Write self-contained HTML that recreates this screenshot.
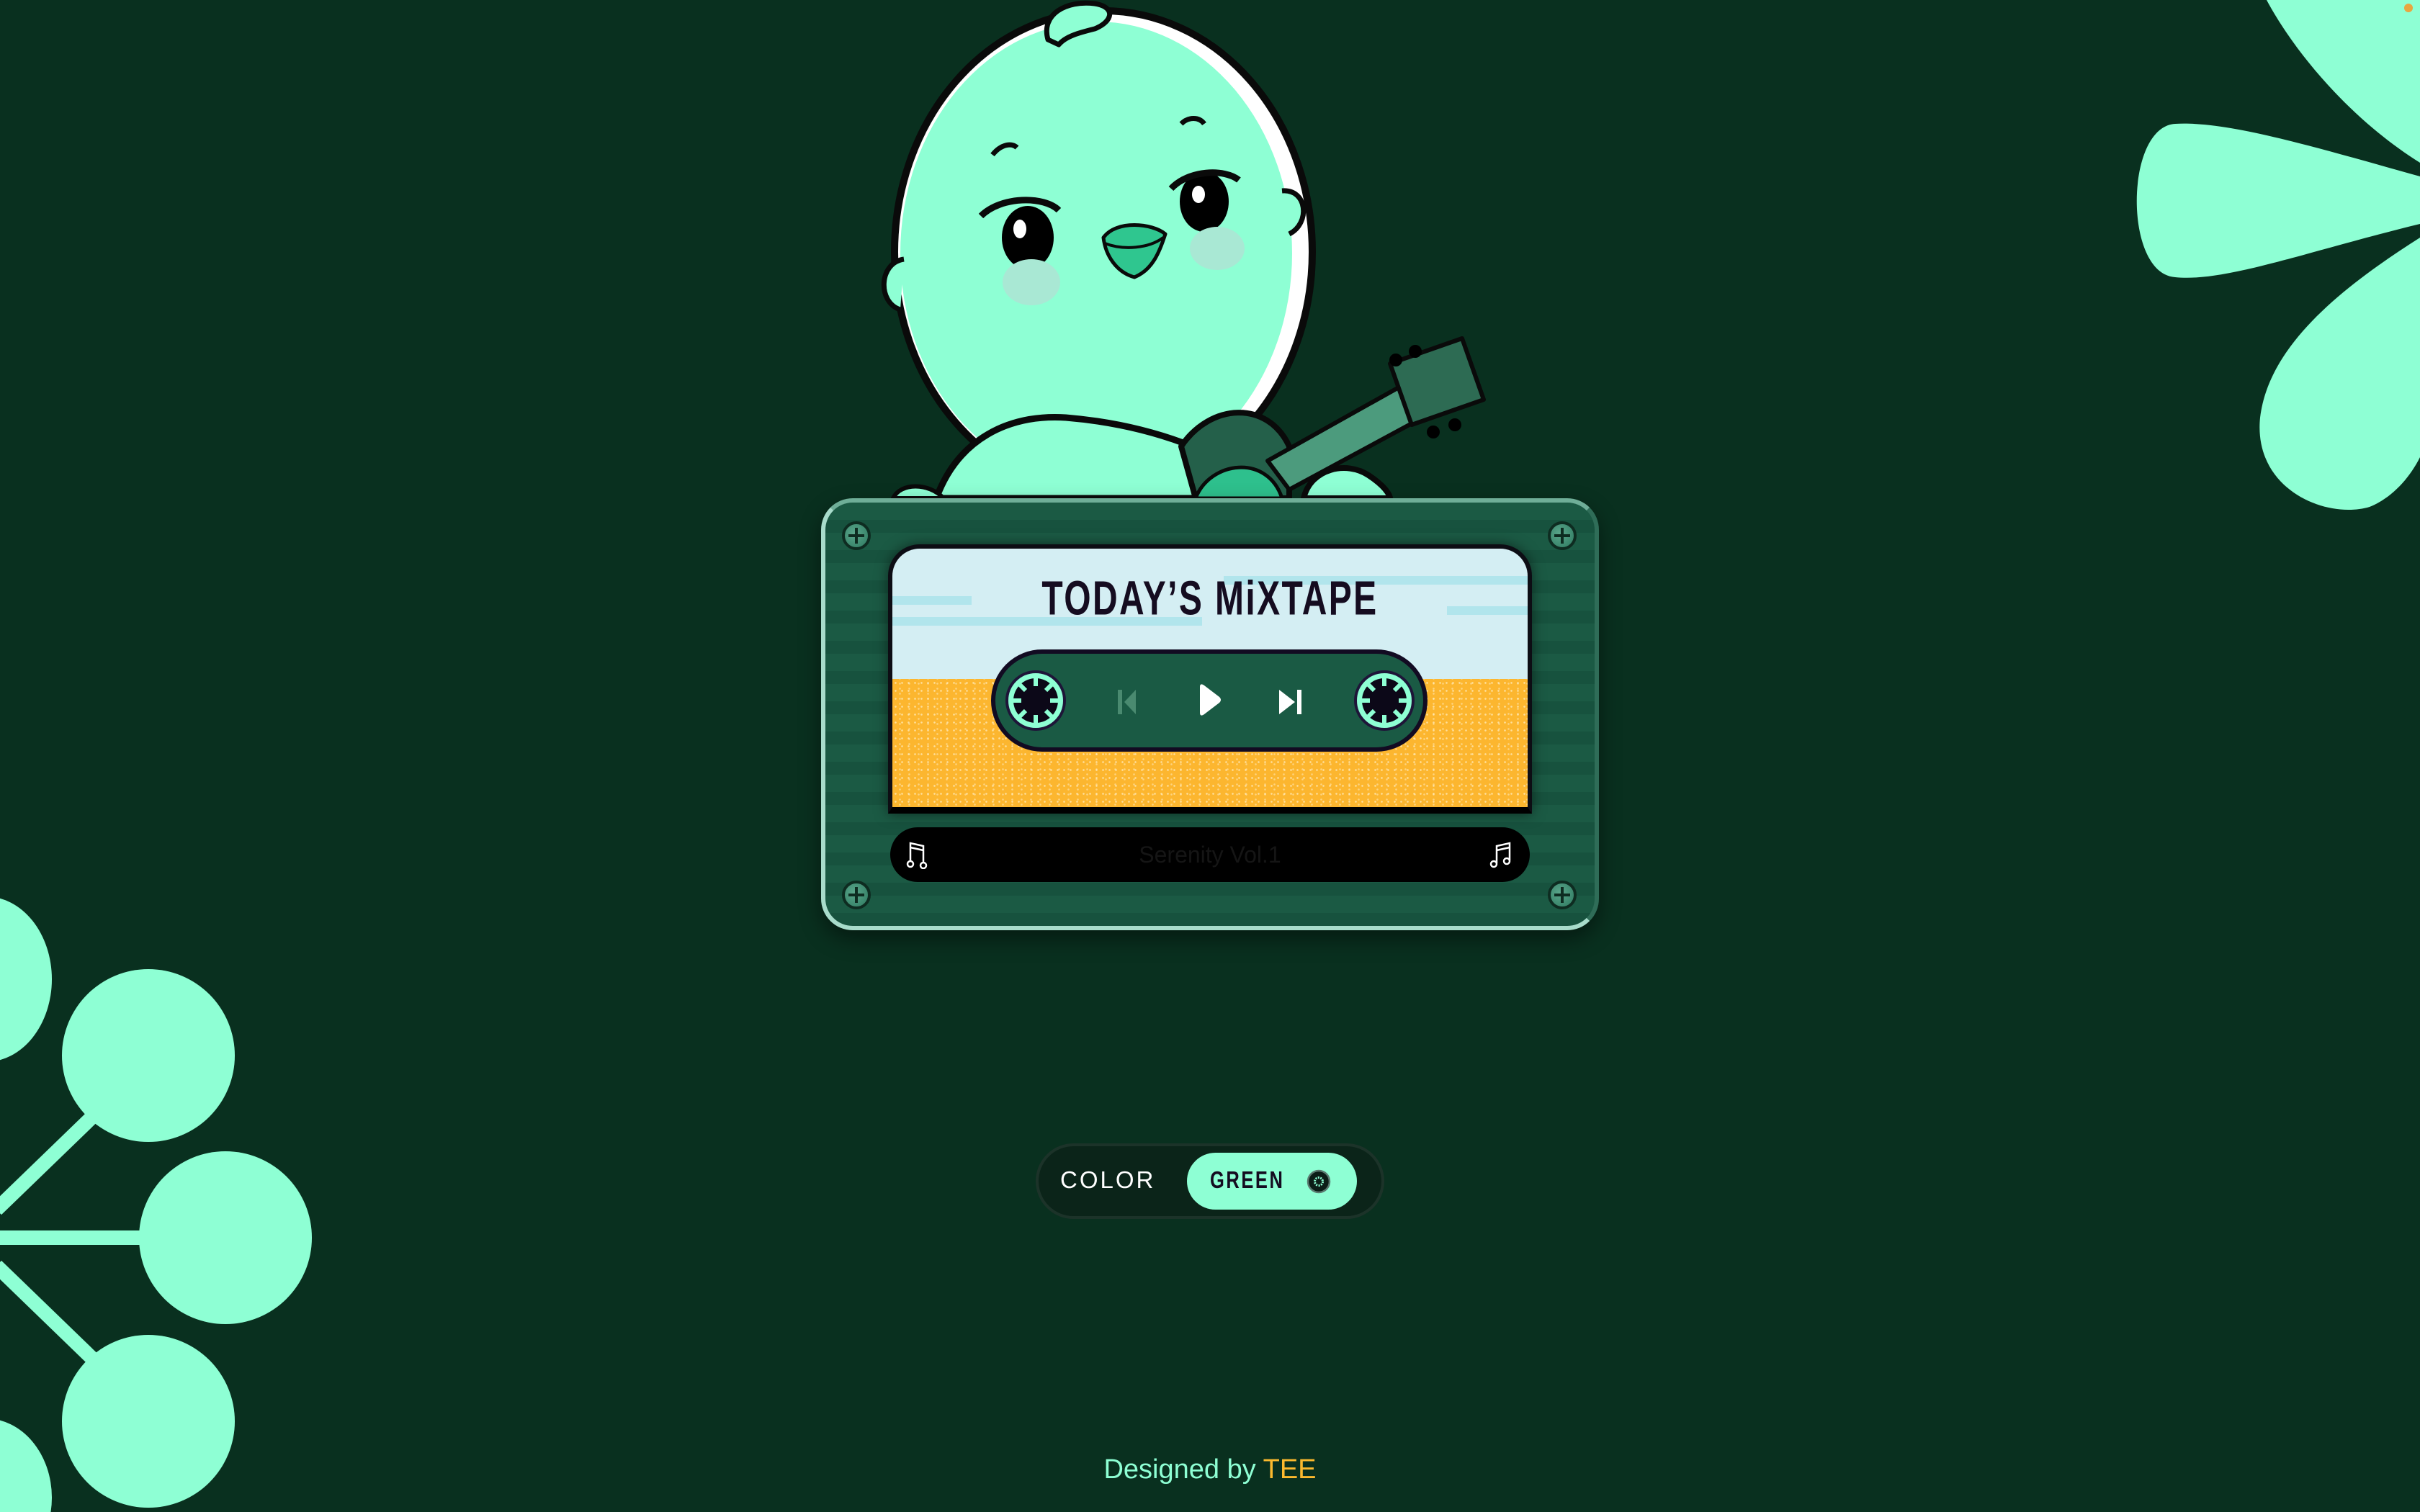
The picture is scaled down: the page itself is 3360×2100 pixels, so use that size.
<!DOCTYPE html>
<html><head><meta charset="utf-8"><style>
html,body{margin:0;padding:0;}
body{width:3360px;height:2100px;background:#09301f;position:relative;overflow:hidden;font-family:"Liberation Sans",sans-serif;}
.abs{position:absolute;}
#cas{left:1140px;top:692px;width:1080px;height:600px;box-sizing:border-box;border-radius:44px;
 border:6px solid #a8dccb;border-right-color:#2f6d58;border-top-color:#6fae98;
 background:repeating-linear-gradient(180deg,#1b5a44 0 24px,#17523e 24px 42px);
 box-shadow:0 12px 30px rgba(0,0,0,.45);}
.screw{width:40px;height:40px;border-radius:50%;background:radial-gradient(circle at 40% 40%,#5aa58a,#2d7a60);border:4px solid #0e2c21;box-sizing:border-box;}
.screw:before,.screw:after{content:"";position:absolute;background:#0e2c21;left:50%;top:50%;transform:translate(-50%,-50%);}
.screw:before{width:22px;height:4px;}.screw:after{width:4px;height:22px;}
#label{left:1233px;top:756px;width:894px;height:374px;box-sizing:border-box;border-radius:44px 44px 0 0;overflow:hidden;
 border:6px solid #0d0d14;border-bottom:9px solid #000;background:#d4eef3;box-shadow:0 0 18px rgba(0,0,0,.5);}
#yellow{left:0;top:181px;width:100%;height:200px;background:#fcb62f;
 background-image:radial-gradient(circle,rgba(255,240,200,.7) 1px,transparent 1.6px),radial-gradient(circle,rgba(255,235,190,.55) 1px,transparent 1.6px);
 background-size:9px 11px,13px 7px;background-position:0 0,4px 3px;}
.str{background:#b1e5ec;height:12px;}
#title{left:0;width:100%;top:34px;text-align:center;font-weight:bold;font-size:60px;color:#150c20;letter-spacing:3px;transform:scale(0.8,1.12);}
#ctrl{left:1376px;top:902px;width:606px;height:142px;box-sizing:border-box;border-radius:71px;background:#1a5a44;border:6px solid #120b22;}
#bar{left:1236px;top:1149px;width:888px;height:76px;border-radius:38px;background:#000;color:#151515;font-size:32px;text-align:center;line-height:76px;}
#pill{left:1438px;top:1588px;width:484px;height:105px;box-sizing:border-box;border-radius:53px;background:#0b2419;border:4px solid #1c3329;}
#green{left:1648px;top:1601px;width:236px;height:79px;border-radius:40px;background:#8effd4;}
</style></head><body>

<svg class="abs" style="left:0;top:0" width="3360" height="2100" viewBox="0 0 3360 2100">
 <g fill="#8effd4">
  <path d="M3147,0 C3190,80 3270,170 3360,226 L3360,0 Z"/>
  <path d="M3360,245 C3200,200 3090,168 3020,172 C2950,176 2948,380 3020,385 C3090,392 3200,350 3360,311 Z"/>
  <path d="M3360,330 C3250,400 3150,480 3138,580 C3128,680 3230,722 3290,704 C3320,692 3345,665 3360,635 Z"/>
  <ellipse cx="-20" cy="1360" rx="92" ry="115"/>
  <ellipse cx="206" cy="1466" rx="120" ry="120"/>
  <ellipse cx="313" cy="1719" rx="120" ry="120"/>
  <ellipse cx="206" cy="1974" rx="120" ry="120"/>
  <ellipse cx="-20" cy="2080" rx="92" ry="110"/>
 </g>
 <g stroke="#8effd4" stroke-width="20">
  <line x1="0" y1="1719" x2="210" y2="1719"/>
  <line x1="-5" y1="1680" x2="150" y2="1530"/>
  <line x1="-5" y1="1758" x2="150" y2="1908"/>
 </g>
 <circle cx="3344" cy="11" r="6" fill="#e8a640"/>

 <!-- bird -->
 <g stroke="#0a0a0a" stroke-linejoin="round">
  <ellipse cx="1532" cy="350" rx="290" ry="335" fill="#fff" stroke-width="10"/>
  <ellipse cx="1522" cy="352" rx="272" ry="322" fill="#8effd4" stroke="none"/>
  <path d="M1455,55 C1445,20 1480,0 1520,5 C1550,10 1545,30 1520,40 C1500,45 1480,50 1470,62 Z" fill="#8effd4" stroke-width="7"/>
  <path d="M1255,360 C1220,365 1218,420 1250,430" fill="#8effd4" stroke-width="7"/>
  <path d="M1780,265 C1815,262 1820,310 1790,325" fill="#8effd4" stroke-width="7"/>
  <!-- body/arm -->
  <path d="M1300,692 C1330,610 1400,575 1480,580 C1600,590 1700,630 1760,680 L1760,692 Z" fill="#8effd4" stroke-width="9"/>
  <path d="M1240,692 C1250,670 1290,670 1310,692 Z" fill="#8effd4" stroke-width="6"/>
  <!-- guitar -->
  <path d="M1640,620 C1680,560 1760,555 1790,620 L1790,692 L1660,692 Z" fill="#24604a" stroke-width="8"/>
  <path d="M1760,640 L2010,500 L2040,545 L1790,680 Z" fill="#4c9b7d" stroke-width="6"/>
  <path d="M1930,505 L2030,470 L2060,555 L1960,590 Z" fill="#2d6b53" stroke-width="6"/>
  <circle cx="1938" cy="500" r="9" fill="#000" stroke="none"/><circle cx="1965" cy="488" r="9" fill="#000" stroke="none"/>
  <circle cx="1990" cy="600" r="9" fill="#000" stroke="none"/><circle cx="2020" cy="590" r="9" fill="#000" stroke="none"/>
  <path d="M1660,692 C1680,640 1760,630 1780,692 Z" fill="#2ec08d" stroke-width="5"/>
  <path d="M1810,692 C1820,650 1870,640 1900,660 C1930,680 1930,692 1930,692 Z" fill="#8effd4" stroke-width="8"/>
  <!-- face -->
  <path d="M1378,215 C1390,200 1405,198 1412,205" fill="none" stroke-width="7"/>
  <path d="M1640,172 C1650,162 1665,162 1672,172" fill="none" stroke-width="7"/>
  <ellipse cx="1427" cy="330" rx="36" ry="44" fill="#000" stroke="none"/>
  <path d="M1362,300 C1390,272 1450,272 1470,292" fill="none" stroke-width="9"/>
  <ellipse cx="1416" cy="318" rx="9" ry="13" fill="#fff" stroke="none"/>
  <ellipse cx="1672" cy="280" rx="34" ry="42" fill="#000" stroke="none"/>
  <path d="M1626,262 C1650,236 1700,234 1720,250" fill="none" stroke-width="9"/>
  <ellipse cx="1664" cy="270" rx="9" ry="12" fill="#fff" stroke="none"/>
  <ellipse cx="1432" cy="392" rx="40" ry="32" fill="#a9e8d4" stroke="none"/>
  <ellipse cx="1690" cy="345" rx="38" ry="30" fill="#a9e8d4" stroke="none"/>
  <path d="M1532,330 C1550,305 1600,310 1618,325 C1610,350 1600,375 1575,385 C1550,378 1535,355 1532,330 Z" fill="#2fc68f" stroke-width="5"/>
  <path d="M1534,338 C1560,348 1595,345 1615,330" fill="none" stroke-width="4"/>
 </g>
</svg>

<div id="cas" class="abs"></div>
<div class="abs screw" style="left:1169px;top:724px"></div>
<div class="abs screw" style="left:2149px;top:724px"></div>
<div class="abs screw" style="left:1169px;top:1223px"></div>
<div class="abs screw" style="left:2149px;top:1223px"></div>

<div id="label" class="abs">
 <div class="abs str" style="left:0;top:66px;width:110px"></div>
 <div class="abs str" style="left:0;top:95px;width:430px"></div>
 <div class="abs str" style="left:460px;top:38px;width:430px"></div>
 <div class="abs str" style="left:770px;top:80px;width:120px"></div>
 <div id="yellow" class="abs"></div>
 <div id="title" class="abs">TODAY’S MiXTAPE</div>
</div>

<div id="ctrl" class="abs"></div>
<svg class="abs" style="left:1376px;top:902px" width="606" height="142" viewBox="0 0 606 142">
 <g id="reel">
  <circle cx="62" cy="71" r="40" fill="#8effd4" stroke="#1e1538" stroke-width="4"/>
  <circle cx="62" cy="71" r="31" fill="#0c0818"/>
  <g stroke="#8effd4" stroke-width="6">
   <line x1="62" y1="40" x2="62" y2="51"/><line x1="62" y1="91" x2="62" y2="102"/>
   <line x1="31" y1="71" x2="42" y2="71"/><line x1="82" y1="71" x2="93" y2="71"/>
   <line x1="40" y1="49" x2="48" y2="57"/><line x1="76" y1="85" x2="84" y2="93"/>
   <line x1="84" y1="49" x2="76" y2="57"/><line x1="48" y1="85" x2="40" y2="93"/>
  </g>
 </g>
 <use href="#reel" x="484"/>
 <g fill="#4a8a70"><rect x="176" y="56" width="6" height="34"/><path d="M185,73 L201,56 L201,90 Z"/></g>
 <path d="M290,52 Q290,46 296,50 L317,66 Q321,70 317,74 L296,90 Q290,94 290,88 Z" fill="#fff"/>
 <g fill="#fff"><path d="M400,56 L422,73 L400,90 Z"/><rect x="425" y="56" width="6" height="34"/></g>
</svg>

<div id="bar" class="abs">Serenity Vol.1</div>
<svg class="abs" style="left:1258px;top:1167px" width="36" height="40" viewBox="0 0 36 40" fill="none" stroke="#fff" stroke-width="2.5">
 <path d="M6,30 V4 L24,8 V32 M6,10 L24,14"/><circle cx="6" cy="33" r="4"/><circle cx="24" cy="35" r="4"/>
</svg>
<svg class="abs" style="left:2066px;top:1167px" width="36" height="40" viewBox="0 0 36 40" fill="none" stroke="#fff" stroke-width="2.5">
 <path d="M12,32 V8 L30,4 V28 M12,14 L30,10"/><circle cx="8" cy="33" r="4"/><circle cx="26" cy="29" r="4"/>
</svg>

<div id="pill" class="abs"></div>
<div class="abs" style="left:1472px;top:1619px;font-size:33px;color:#fff;letter-spacing:3px;line-height:40px">COLOR</div>
<div id="green" class="abs"></div>
<div class="abs" style="left:1680px;top:1619px;width:104px;text-align:center;font-weight:bold;font-size:30px;color:#140c20;letter-spacing:3px;line-height:42px;transform:scale(0.85,1.1);transform-origin:0 50%">GREEN</div>
<svg class="abs" style="left:1814px;top:1624px" width="34" height="34" viewBox="0 0 34 34">
 <circle cx="17" cy="17" r="15" fill="#0c1d17" stroke="#5a7a70" stroke-width="2.5"/>
 <circle cx="17" cy="17" r="5.5" fill="none" stroke="#8effd4" stroke-width="3" stroke-dasharray="2 1.5"/>
</svg>

<div class="abs" style="left:0;width:3360px;top:2016px;text-align:center;font-size:38px;line-height:50px;color:#8effd4">Designed by <span style="color:#fbb92e">TEE</span></div>
</body></html>
